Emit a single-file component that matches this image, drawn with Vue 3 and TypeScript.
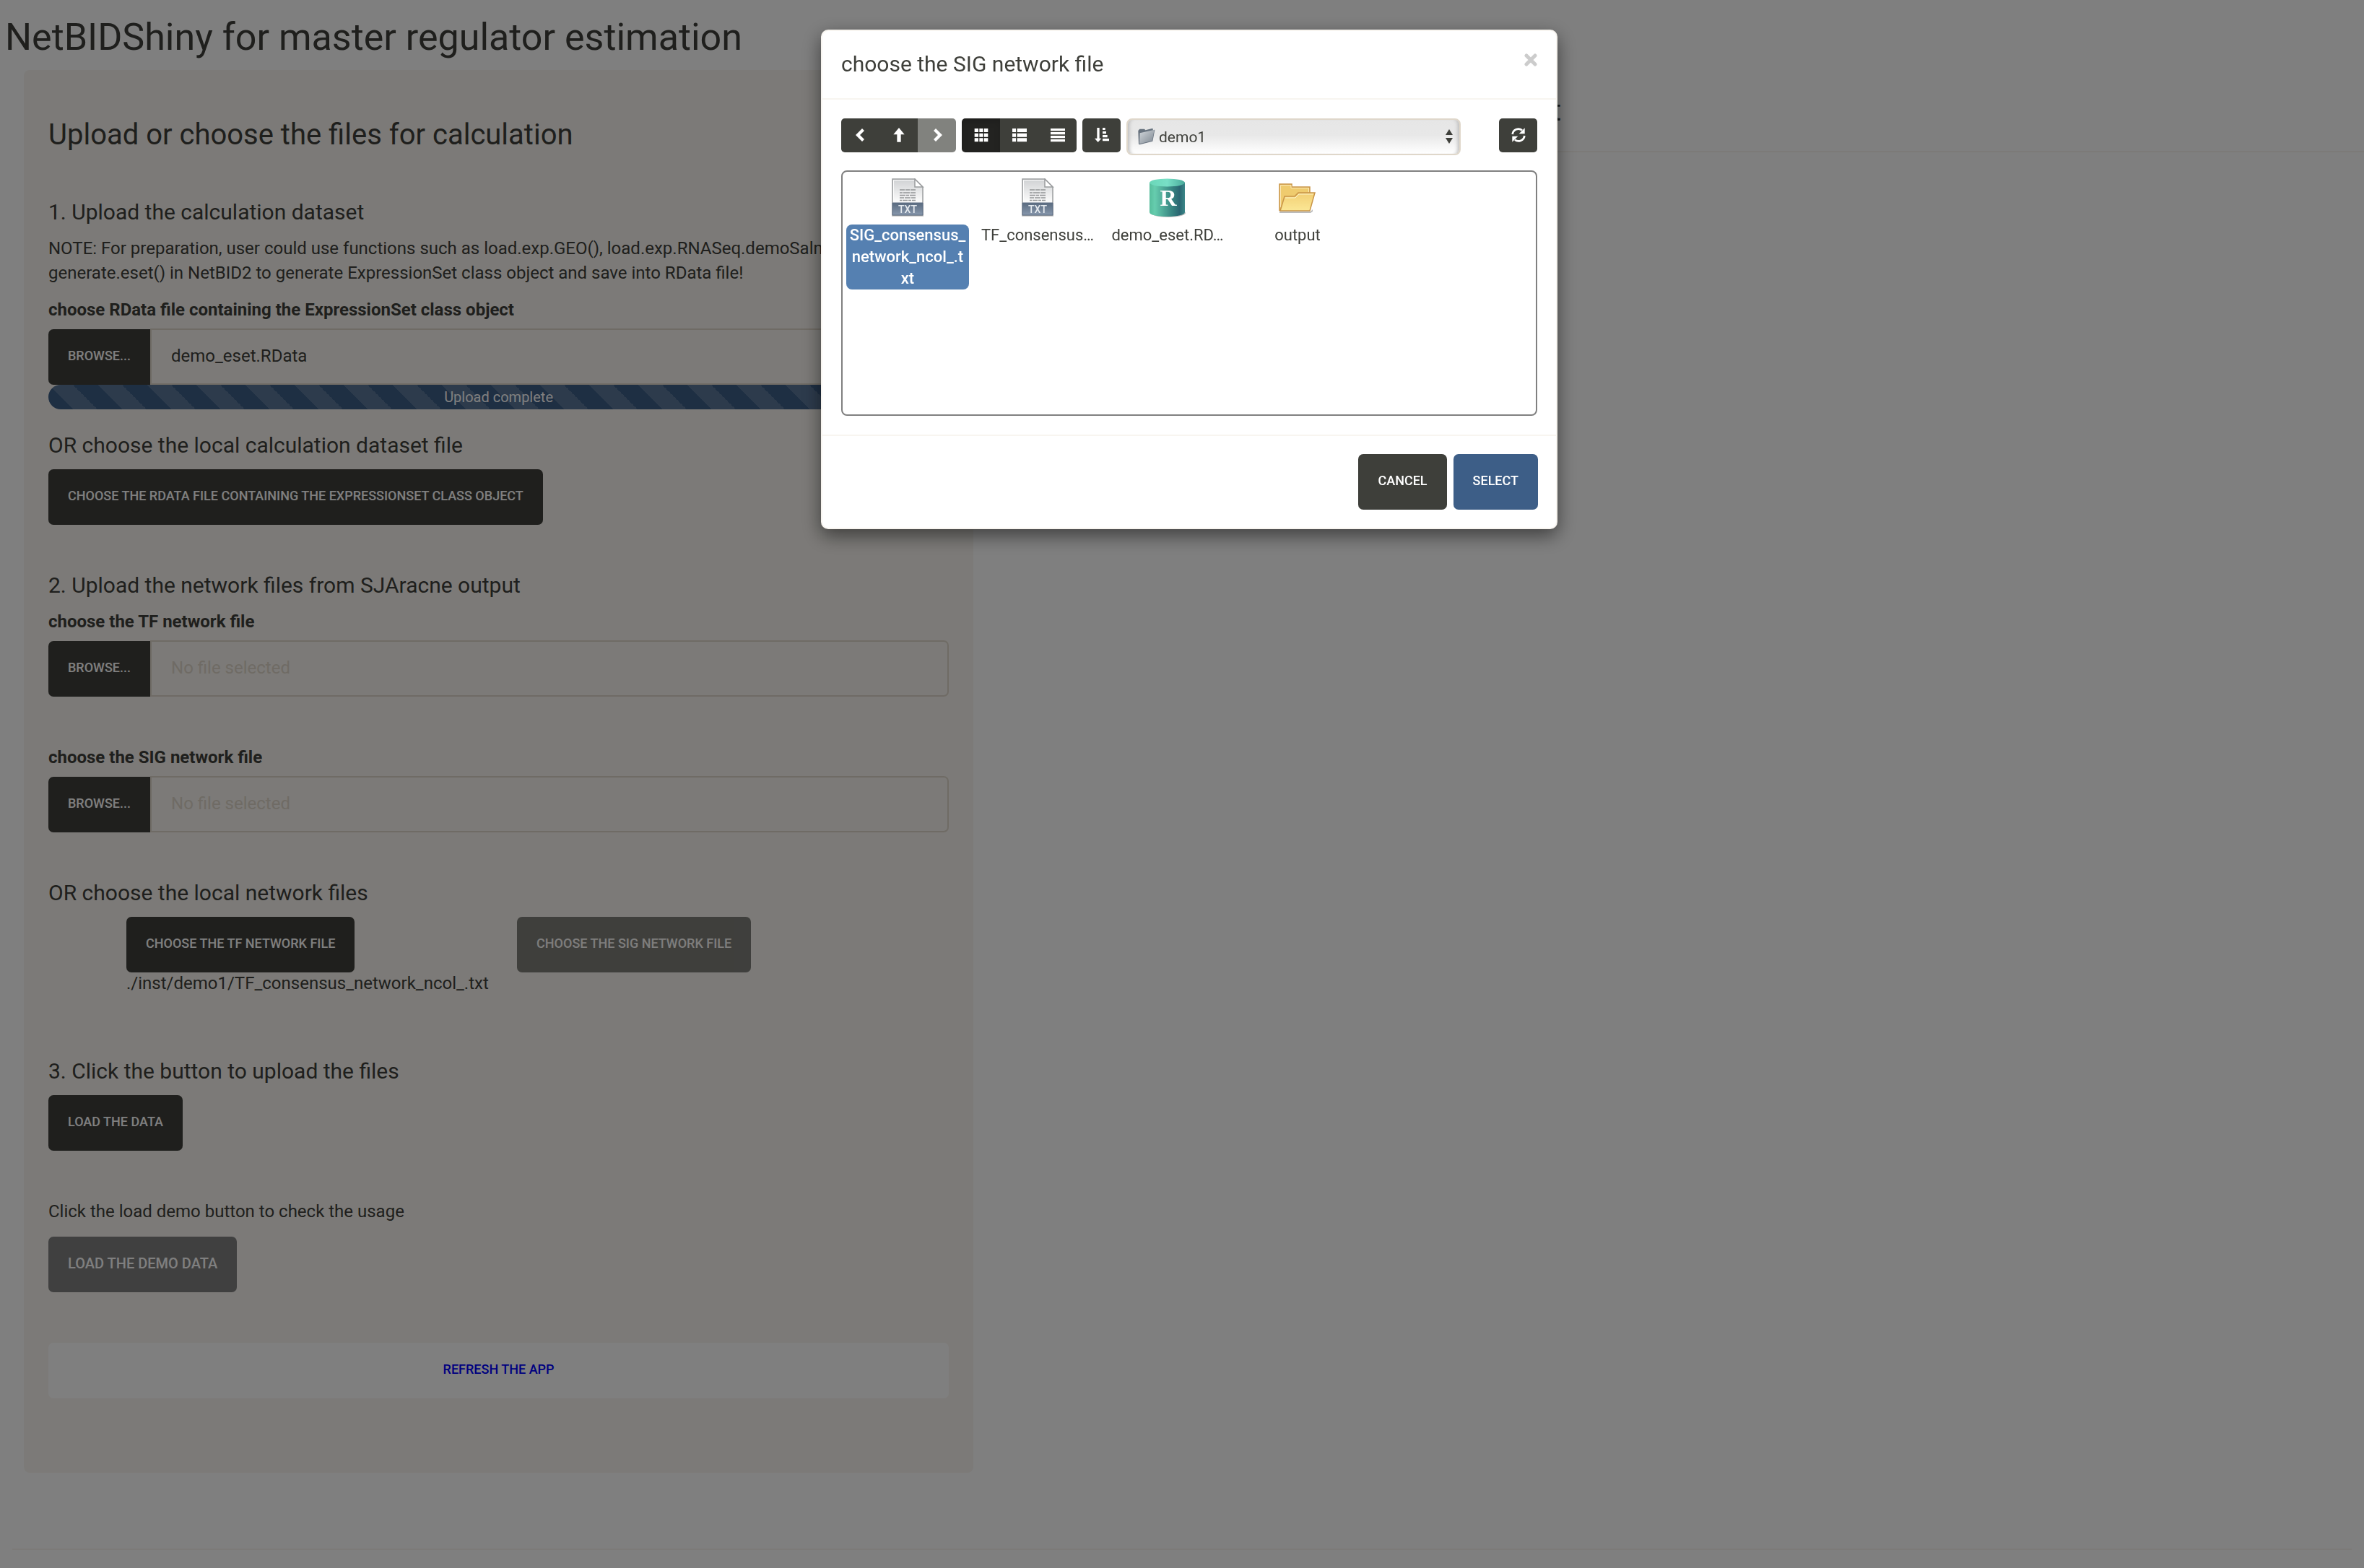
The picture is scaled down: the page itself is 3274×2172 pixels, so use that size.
<script setup lang="ts">
import { ref } from 'vue'

interface FileEntry {
  name: string
  kind: 'txt' | 'rdata' | 'folder'
}

const files: FileEntry[] = [
  { name: 'SIG_consensus_network_ncol_.txt', kind: 'txt' },
  { name: 'TF_consensus_network_ncol_.txt', kind: 'txt' },
  { name: 'demo_eset.RData', kind: 'rdata' },
  { name: 'output', kind: 'folder' },
]

const selected = ref(0)
const directory = ref('demo1')
const uploaded = ref('demo_eset.RData')

// Only the selected file shows its full name; the others are cut to one line.
const maxChars = 12
function label(file: FileEntry, index: number): string {
  if (index === selected.value || file.name.length <= maxChars) return file.name
  return file.name.slice(0, maxChars) + '…'
}
</script>

<template>
  <div class="page">
    <h2 class="title">NetBIDShiny for master regulator estimation</h2>
    <div class="columns">
      <form class="panel" @submit.prevent>
        <h3>Upload or choose the files for calculation</h3>

        <section>
          <h4>1. Upload the calculation dataset</h4>
          <p class="note">
            NOTE: For preparation, user could use functions such as load.exp.GEO(), load.exp.RNASeq.demoSalmon(),<br />
            generate.eset() in NetBID2 to generate ExpressionSet class object and save into RData file!
          </p>
          <label class="field-label" for="eset">choose RData file containing the ExpressionSet class object</label>
          <div class="file-group">
            <button type="button" class="btn browse">Browse...</button>
            <input id="eset" v-model="uploaded" type="text" readonly />
          </div>
          <div class="progress">Upload complete</div>
          <h4 class="or-dataset">OR choose the local calculation dataset file</h4>
          <button type="button" class="btn">Choose the RData file containing the ExpressionSet class object</button>
        </section>

        <section>
          <h4>2. Upload the network files from SJAracne output</h4>
          <label class="field-label" for="tf">choose the TF network file</label>
          <div class="file-group">
            <button type="button" class="btn browse">Browse...</button>
            <input id="tf" type="text" placeholder="No file selected" readonly />
          </div>
        </section>

        <section>
          <label class="field-label" for="sig">choose the SIG network file</label>
          <div class="file-group">
            <button type="button" class="btn browse">Browse...</button>
            <input id="sig" type="text" placeholder="No file selected" readonly />
          </div>
        </section>

        <section>
          <h4>OR choose the local network files</h4>
          <div class="local-files">
            <div>
              <button type="button" class="btn">Choose the TF network file</button>
              <p class="path">./inst/demo1/TF_consensus_network_ncol_.txt</p>
            </div>
            <div>
              <button type="button" class="btn" disabled>Choose the SIG network file</button>
            </div>
          </div>
        </section>

        <section class="load">
          <h4>3. Click the button to upload the files</h4>
          <button type="button" class="btn">Load the data</button>
        </section>

        <section>
          <p class="usage">Click the load demo button to check the usage</p>
          <button type="button" class="btn demo">Load the demo data</button>
        </section>

        <section class="refresh-row">
          <button type="button" class="btn refresh">Refresh the app</button>
        </section>
      </form>
      <main class="result">
        <h3 class="result-title">t</h3>
      </main>
    </div>
    <hr class="rule" />
  </div>

  <div class="backdrop">
    <div class="dialog" role="dialog" aria-modal="true" aria-labelledby="dialog-title">
      <header class="dialog-head">
        <h4 id="dialog-title">choose the SIG network file</h4>
        <button type="button" class="close" aria-label="Close">
          <svg viewBox="0 0 18 18" width="18" height="18"><path d="M3 3l12 12M15 3L3 15" stroke="#ccc" stroke-width="5" stroke-linecap="round" /></svg>
        </button>
      </header>

      <div class="dialog-body">
        <div class="toolbar">
          <div class="group">
            <button type="button" aria-label="Back">
              <svg viewBox="0 0 60 60"><path d="M36 3L9 30l27 27 9-9-18-18 18-18z" /></svg>
            </button>
            <button type="button" aria-label="Up">
              <svg viewBox="0 0 60 60"><path d="M30 0L53 28H38v31H22V28H7z" /></svg>
            </button>
            <button type="button" aria-label="Forward" disabled>
              <svg viewBox="0 0 60 60"><path d="M24 3l27 27-27 27-9-9 18-18-18-18z" /></svg>
            </button>
          </div>
          <div class="group">
            <button type="button" class="active" aria-label="Icons">
              <svg viewBox="0 0 60 60"><path d="M2 3h16v15H2zM22 3h16v15H22zM42 3h16v15H42zM2 23h16v15H2zM22 23h16v15H22zM42 23h16v15H42zM2 43h16v15H2zM22 43h16v15H22zM42 43h16v15H42z" /></svg>
            </button>
            <button type="button" aria-label="List">
              <svg viewBox="0 0 60 60"><path d="M0 3h15v15H0zM20 3h40v15H20zM0 23h15v15H0zM20 23h40v15H20zM0 43h15v15H0zM20 43h40v15H20z" /></svg>
            </button>
            <button type="button" aria-label="Details">
              <svg viewBox="0 0 60 60"><path d="M0 3h60v10H0zM0 18h60v10H0zM0 33h60v10H0zM0 48h60v10H0z" /></svg>
            </button>
          </div>
          <div class="group">
            <button type="button" aria-label="Sort">
              <svg viewBox="0 0 60 60"><path d="M10 0h10v44h8L14 60 0 44h10zM33 0h11v9H33zM33 15h15v10H33zM33 30h20v10H33zM33 45h27v10H33z" /></svg>
            </button>
          </div>
          <div class="dir">
            <svg class="dir-icon" viewBox="0 0 72 72" width="24" height="24">
              <defs>
                <linearGradient id="dir-fill" x1="0" y1="0" x2="1" y2="1">
                  <stop offset="0" stop-color="#d3d8dc" />
                  <stop offset="1" stop-color="#7d8690" />
                </linearGradient>
              </defs>
              <path d="M3 68L1 12l6-7h20l4 5 30-8 2 8 7-2-9 48-54 14z" fill="#66717d" />
              <path d="M8 22l60-14-9 46L6 67z" fill="url(#dir-fill)" />
            </svg>
            <select v-model="directory" aria-label="Directory">
              <option>demo1</option>
            </select>
            <svg class="dir-arrows" viewBox="0 0 10 20" width="10" height="20"><path d="M5 0l5 8H0zM5 20l5-8H0z" fill="#3e3f3a" /></svg>
          </div>
          <div class="group reload">
            <button type="button" aria-label="Refresh">
              <svg viewBox="0 0 60 60"><path d="M5 27A25 25 0 0 1 45 10" fill="none" stroke="#fff" stroke-width="8" /><path d="M56 1v24H32z" /><path d="M55 33A25 25 0 0 1 15 50" fill="none" stroke="#fff" stroke-width="8" /><path d="M4 59V35h24z" /></svg>
            </button>
          </div>
        </div>

        <ul class="files">
          <li v-for="(file, i) in files" :key="file.name" :title="file.name" :class="{ selected: i === selected }" @click="selected = i">
            <svg v-if="file.kind === 'txt'" class="icon" viewBox="0 0 54 54">
              <defs>
                <linearGradient id="sheet" x1="0" y1="0" x2="0" y2="1">
                  <stop offset="0" stop-color="#cfd1d3" />
                  <stop offset="0.6" stop-color="#fafafa" />
                </linearGradient>
                <linearGradient id="band" x1="0" y1="0" x2="0" y2="1">
                  <stop offset="0" stop-color="#5a6b80" />
                  <stop offset="1" stop-color="#8797ac" />
                </linearGradient>
              </defs>
              <path d="M5 51h44v2H5z" fill="#d0d0d0" />
              <path d="M6 1h31l11 11v39H6z" fill="url(#sheet)" stroke="#9b9d9f" stroke-width="1.500" />
              <path d="M7.500 34V2.500H36" fill="none" stroke="#fff" />
              <path d="M37 1v11h11z" fill="#fff" stroke="#9b9d9f" stroke-width="1.500" />
              <g stroke="#939597" stroke-width="1.600">
                <path d="M16 16h7m1 0h6m1 0h7" />
                <path d="M16 20h4m1 0h9m1 0h7" />
                <path d="M16 23.500h8m1 0h4m1 0h8" />
                <path d="M16 27h6m1 0h8m1 0h6" />
                <path d="M16 30.500h3m1 0h7m1 0h4m1 0h5" />
              </g>
              <path d="M6 34h42v17H6z" fill="url(#band)" stroke="#5f6f84" />
              <text x="27" y="48" text-anchor="middle" class="txt">TXT</text>
            </svg>
            <svg v-else-if="file.kind === 'rdata'" class="icon" viewBox="0 0 54 54">
              <defs>
                <linearGradient id="drum">
                  <stop offset="0" stop-color="#56bd9c" />
                  <stop offset="0.150" stop-color="#66cdae" />
                  <stop offset="0.650" stop-color="#368280" />
                  <stop offset="0.850" stop-color="#2a6672" />
                  <stop offset="1" stop-color="#3b8788" />
                </linearGradient>
                <linearGradient id="lid">
                  <stop offset="0" stop-color="#6ad7b8" />
                  <stop offset="0.500" stop-color="#78dfc6" />
                  <stop offset="1" stop-color="#49aa9b" />
                </linearGradient>
              </defs>
              <ellipse cx="28" cy="48" rx="24" ry="6" fill="#999" opacity="0.600" />
              <path d="M2 6v41c0 3.500 10 6 24.500 6S51 50.500 51 47V6z" fill="url(#drum)" />
              <ellipse cx="26.500" cy="6" rx="24.500" ry="5.500" fill="url(#lid)" />
              <text x="28" y="38" text-anchor="middle" class="letter">R</text>
            </svg>
            <svg v-else class="icon" viewBox="0 0 54 54">
              <defs>
                <linearGradient id="leaf" x1="0" y1="0" x2="0" y2="1">
                  <stop offset="0" stop-color="#f2cf74" />
                  <stop offset="1" stop-color="#fbe795" />
                </linearGradient>
              </defs>
              <path d="M2 46h43l3-3v3l-3 2H2z" fill="#bbb" />
              <path d="M2 45V8h17v4h25v9" fill="#efcb6e" stroke="#c99548" stroke-width="1.500" />
              <path d="M3.500 40V9.500H18V13.500h24.500V19" fill="none" stroke="#fbe9b5" />
              <path d="M3 45l6-20h14l5-5h23l-7 25z" fill="url(#leaf)" stroke="#c99548" stroke-width="1.500" />
              <path d="M10 27h14l5-5h20" fill="none" stroke="#fdf3c9" />
            </svg>
            <span class="name">{{ label(file, i) }}</span>
          </li>
        </ul>
      </div>

      <footer class="dialog-foot">
        <button type="button" class="btn">Cancel</button>
        <button type="button" class="btn primary">Select</button>
      </footer>
    </div>
  </div>
</template>

<style>
body {
  margin: 0;
  background: #fff;
}
</style>

<style scoped>
.page,
.backdrop {
  font-family: Roboto, sans-serif;
  font-size: 24px;
  line-height: 34px;
  color: #3e3f3a;
}
h2,
h3,
h4,
p {
  margin: 0;
  font-weight: 400;
}
h2 {
  font-size: 52px;
  line-height: 60px;
}
h3 {
  font-size: 40px;
  line-height: 44px;
}
h4 {
  font-size: 30px;
  line-height: 34px;
}
.title {
  padding: 22px 0 15px 7px;
}
.columns {
  display: flex;
  align-items: flex-start;
}
.panel {
  box-sizing: border-box;
  width: calc(100% * 5 / 12 - 49px);
  margin: 0 16px 0 33px;
  padding: 68px 34px 103px;
  border-radius: 8px;
  background: #f8f5f0;
}
.result {
  flex: 1;
  margin-top: 42px;
  padding-bottom: 40px;
  border-bottom: 2px solid #f8f5f0;
}
.result-title {
  width: 798px;
  text-align: right;
  line-height: 30px;
}
section {
  margin-top: 67px;
}
h3 + section {
  margin-top: 68px;
}
section > h4 {
  margin-bottom: 16px;
}
.load {
  margin-top: 90px;
}
.field-label {
  display: block;
  margin-bottom: 9px;
  font-weight: 700;
}
.note {
  margin-bottom: 17px;
  white-space: nowrap;
}
.file-group {
  display: flex;
  align-items: flex-end;
}
.file-group input {
  box-sizing: border-box;
  flex: 1;
  min-width: 0;
  height: 78px;
  padding: 0 27px 2px;
  border: 2px solid #dfd7ca;
  border-radius: 0 7px 7px 0;
  background: transparent;
  color: inherit;
  font: inherit;
}
.file-group input::placeholder {
  color: #dfd7ca;
  opacity: 1;
}
.btn {
  box-sizing: border-box;
  height: 77px;
  padding: 0 27px 3px;
  border: 0;
  border-radius: 7px;
  background: #3e3f3a;
  color: #fff;
  font: 500 18px/26px Roboto, sans-serif;
  text-transform: uppercase;
  white-space: nowrap;
}
.btn:disabled {
  opacity: 0.65;
}
.btn.browse {
  border-radius: 7px 0 0 7px;
}
.btn.demo {
  background: #808080;
  font-size: 20px;
}
.btn.refresh {
  width: 100%;
  background: #fff;
  color: #00f;
}
.btn.primary {
  background: #3d5e87;
}
.progress {
  height: 34px;
  border-radius: 17px;
  background-color: #3d5e87;
  background-image: linear-gradient(
    45deg,
    rgba(255, 255, 255, 0.15) 25%,
    transparent 25%,
    transparent 50%,
    rgba(255, 255, 255, 0.15) 50%,
    rgba(255, 255, 255, 0.15) 75%,
    transparent 75%
  );
  background-size: 68px 68px;
  color: #fff;
  font-size: 20px;
  text-align: center;
}
.or-dataset {
  margin-top: 33px;
}
.local-files {
  display: grid;
  grid-template-columns: 19fr 21fr;
  padding-left: 108px;
}
.local-files .btn {
  display: block;
}
.path {
  line-height: 30px;
}
.usage {
  margin-bottom: 18px;
}
section > .btn {
  display: block;
}
.refresh-row {
  margin-top: 70px;
}
.rule {
  height: 2px;
  margin: 105px 17px 25px;
  border: 0;
  background: #f8f5f0;
}

.backdrop {
  position: fixed;
  inset: 0;
  display: flex;
  align-items: flex-start;
  justify-content: center;
  padding: 41px 0 0 20px;
  background: rgba(0, 0, 0, 0.5);
}
.dialog {
  box-sizing: border-box;
  width: 1020px;
  border: 2px solid #f8f5f0;
  border-radius: 10px;
  background: #fff;
  box-shadow: 0 9px 26px rgba(0, 0, 0, 0.5);
}
.dialog-head {
  display: flex;
  align-items: flex-start;
  justify-content: space-between;
  padding: 29px 26px 30px;
  border-bottom: 2px solid #f8f5f0;
}
.close {
  display: flex;
  margin-top: 2px;
  padding: 0;
  border: 0;
  background: none;
}
.dialog-body {
  padding: 26px;
}
.toolbar {
  display: flex;
  align-items: flex-start;
  gap: 8px;
}
.group {
  display: flex;
  overflow: hidden;
  border-radius: 5px;
}
.group button {
  display: flex;
  align-items: center;
  justify-content: center;
  width: 53px;
  height: 47px;
  padding: 0 0 2px;
  border: 0;
  background: #3e3f3a;
}
.group button:disabled {
  opacity: 0.65;
}
.group button.active {
  background: #232321;
  box-shadow: inset 0 5px 9px rgba(0, 0, 0, 0.13);
}
.group svg {
  width: 20px;
  height: 20px;
  fill: #fff;
}
.reload {
  margin-left: auto;
}
.dir {
  position: relative;
  width: 463px;
}
.dir select {
  box-sizing: border-box;
  display: block;
  width: 100%;
  height: 51px;
  padding: 0 40px 0 43px;
  border: 2px solid #dfd7ca;
  border-radius: 8px;
  appearance: none;
  background: linear-gradient(#e6e6e6 0%, #e8e8e8 45%, #fff 100%);
  box-shadow: inset 6px 0 5px -4px #bbb, inset -6px 0 5px -4px #bbb;
  color: #3e3f3a;
  font: 21px/30px Roboto, sans-serif;
}
.dir-icon {
  position: absolute;
  top: 13px;
  left: 16px;
}
.dir-arrows {
  position: absolute;
  top: 15px;
  right: 11px;
}
.files {
  display: flex;
  flex-wrap: wrap;
  align-content: flex-start;
  box-sizing: border-box;
  height: 340px;
  margin: 21px 0 0;
  padding: 9px 0 0;
  border: 2px solid #808080;
  border-radius: 8px;
  list-style: none;
}
.files li {
  display: flex;
  flex-direction: column;
  align-items: center;
  width: 180px;
}
.icon {
  width: 54px;
  height: 54px;
}
.txt {
  fill: #e4e9ee;
  font: 500 14px Roboto, sans-serif;
}
.letter {
  fill: #fff;
  font: 700 32px 'Liberation Serif', serif;
}
.name {
  box-sizing: border-box;
  width: 170px;
  margin-top: 10px;
  padding: 0 4px;
  border-radius: 8px;
  font-size: 22px;
  line-height: 30px;
  text-align: center;
  word-break: break-all;
}
.selected .name {
  background: #5580b1;
  color: #fff;
  font-weight: 500;
}
.dialog-foot {
  display: flex;
  justify-content: flex-end;
  gap: 9px;
  padding: 25px;
  border-top: 2px solid #f8f5f0;
}
</style>
